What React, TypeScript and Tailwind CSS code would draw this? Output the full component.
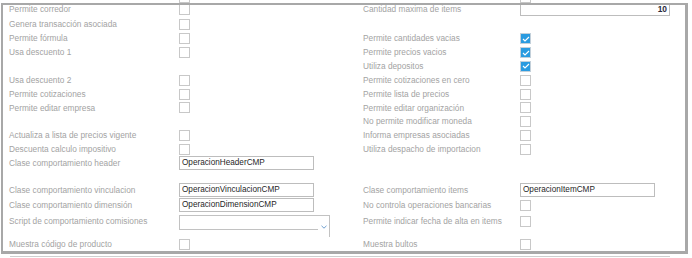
import React from 'react';

type Ctl =
  | { t: 'check' }
  | { t: 'checked' }
  | { t: 'input'; v: string }
  | { t: 'num'; v: string }
  | { t: 'select' };

type Cell = [string, Ctl] | null;

const check: Ctl = { t: 'check' };
const checked: Ctl = { t: 'checked' };

const rows: { h: string; l: Cell; r: Cell }[] = [
  { h: 'h-[14.5px]', l: ['Permite corredor', check], r: ['Cantidad maxima de items', { t: 'num', v: '10' }] },
  { h: 'h-[15px]', l: ['Genera transacción asociada', check], r: null },
  { h: 'h-[14.25px]', l: ['Permite fórmula', check], r: ['Permite cantidades vacias', checked] },
  { h: 'h-[13.5px]', l: ['Usa descuento 1', check], r: ['Permite precios vacios', checked] },
  { h: 'h-[13.75px]', l: null, r: ['Utiliza depositos', checked] },
  { h: 'h-[14px]', l: ['Usa descuento 2', check], r: ['Permite cotizaciones en cero', check] },
  { h: 'h-[14px]', l: ['Permite cotizaciones', check], r: ['Permite lista de precios', check] },
  { h: 'h-[13.5px]', l: ['Permite editar empresa', check], r: ['Permite editar organización', check] },
  { h: 'h-[13.5px]', l: null, r: ['No permite modificar moneda', check] },
  { h: 'h-[14px]', l: ['Actualiza a lista de precios vigente', check], r: ['Informa empresas asociadas', check] },
  { h: 'h-[14px]', l: ['Descuenta calculo impositivo', check], r: ['Utiliza despacho de importacion', check] },
  { h: 'h-[13.5px]', l: ['Clase comportamiento header', { t: 'input', v: 'OperacionHeaderCMP' }], r: null },
  { h: 'h-[13px]', l: null, r: null },
  {
    h: 'h-[14.5px]',
    l: ['Clase comportamiento vinculacion', { t: 'input', v: 'OperacionVinculacionCMP' }],
    r: ['Clase comportamiento items', { t: 'input', v: 'OperacionItemCMP' }],
  },
  {
    h: 'h-[16.5px]',
    l: ['Clase comportamiento dimensión', { t: 'input', v: 'OperacionDimensionCMP' }],
    r: ['No controla operaciones bancarias', check],
  },
  {
    h: 'h-[14.5px]',
    l: ['Script de comportamiento comisiones', { t: 'select' }],
    r: ['Permite indicar fecha de alta en items', check],
  },
  { h: 'h-[10.5px]', l: null, r: null },
  { h: 'h-[12px]', l: ['Muestra código de producto', check], r: ['Muestra bultos', check] },
];

function Control({ c }: { c: Ctl }) {
  switch (c.t) {
    case 'check':
      return <div className="w-[11px] h-[11px] border border-[#c8c8c8] bg-white" />;
    case 'checked':
      return (
        <div className="w-[11px] h-[11px] border border-[#c3d0da] bg-[#2a9be0] flex items-center justify-center">
          <svg width="8" height="6" viewBox="0 0 8 6" fill="none">
            <path d="M1 3l2 2 4-4" stroke="white" strokeWidth="1.1" />
          </svg>
        </div>
      );
    case 'input':
      return (
        <div className="w-[135px] h-[14px] border border-[#bdbdbd] bg-white pl-[2px] flex items-center text-[8.2px] text-[#1f1f1f] leading-none">
          {c.v}
        </div>
      );
    case 'num':
      return (
        <div className="w-[150px] h-[13px] border border-[#bdbdbd] bg-white pr-[2px] flex items-center justify-end text-[8.4px] font-bold text-[#2a2a3a] leading-none">
          {c.v}
        </div>
      );
    case 'select':
      return (
        <div className="self-start mt-[1px] flex h-[14px]">
          <div className="w-[139px] h-[15px] border-t border-l border-b border-[#c2c2c2] bg-white" />
          <div className="w-[12px] h-[22px] border-t border-r border-[#c2c2c2] bg-white flex items-start justify-center pt-[9px]">
            <svg width="6" height="4" viewBox="0 0 6 4" fill="none">
              <path d="M0.5 0.8L3 3.2 5.5 0.8" stroke="#6f9fcf" strokeWidth="1" />
            </svg>
          </div>
        </div>
      );
  }
}

function Pair({ cell }: { cell: Cell }) {
  if (!cell) return <><div /><div /></>;
  return (
    <>
      <div className="text-[#a3a3a3] whitespace-nowrap leading-none">{cell[0]}</div>
      <div className="flex items-center">
        <Control c={cell[1]} />
      </div>
    </>
  );
}

export default function App() {
  return (
    <div
      className="w-[692px] h-[258px] bg-white overflow-hidden text-[8.3px]"
      style={{ fontFamily: '"Liberation Sans", Arial, sans-serif' }}
    >
      {/* checkbox bottoms of the row scrolled above */}
      <div className="h-[3px] grid grid-cols-[170px_184px_157px_1fr] pl-[9px]">
        <div />
        <div className="w-[11px] h-[3px] border-x border-b border-[#c8c8c8]" />
        <div />
        <div className="w-[11px] h-[3px] border-x border-b border-[#c8c8c8]" />
      </div>

      <div className="ml-[1px] w-[687px] h-[251px] border-2 border-r-[3px] border-b-[3px] border-[#a8a8a8] overflow-hidden">
        <div className="-mt-[3px] pl-[6px] flex flex-col">
          {rows.map((row, i) => (
            <div key={i} className={`${row.h} grid grid-cols-[170px_184px_157px_1fr] items-center`}>
              <Pair cell={row.l} />
              <Pair cell={row.r} />
            </div>
          ))}
        </div>
      </div>

      <div className="mt-[2px] ml-[10px] w-[660px] h-px bg-[#cfcfcf]" />
    </div>
  );
}
